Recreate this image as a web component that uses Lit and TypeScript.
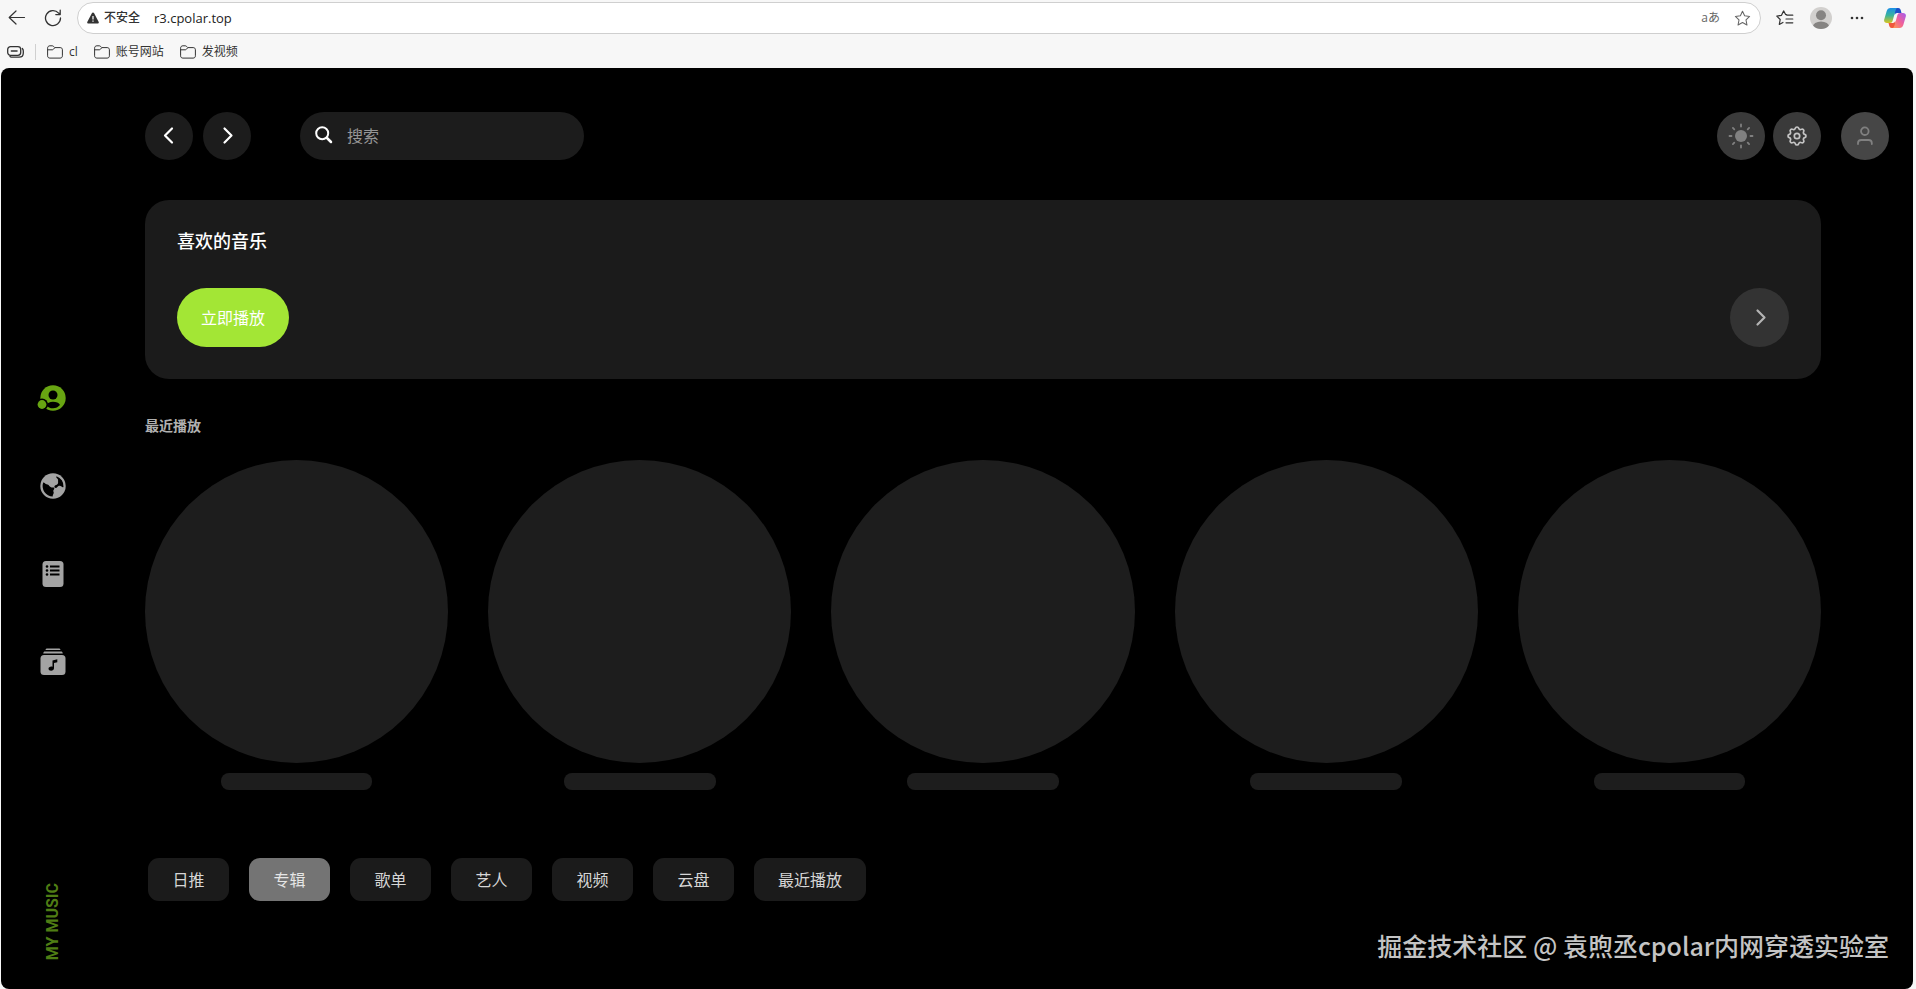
import { LitElement, html, css, svg } from "lit";
import { customElement, state } from "lit/decorators.js";

const folderIcon = html`<svg class="folder" viewBox="0 0 16 14" width="16" height="14" aria-hidden="true">
  <path d="M.6 3.2c0-1.500.9-2.400 2.300-2.400h2.300c.6 0 1 .2 1.400.6l1.200 1.200h5.400c1.400 0 2.200.9 2.200 2.200v6c0 1.500-.9 2.300-2.300 2.300H2.900C1.500 13.100.6 12.300.6 10.800z"/>
  <path d="M.6 4.800h4.600c.6 0 .9-.2 1.300-.6l1.400-1.600"/>
</svg>`;

const chevron = (dir: "left" | "right") => html`<svg viewBox="0 0 24 24" width="24" height="24" fill="none"
  stroke="currentColor" stroke-width="2.200" stroke-linecap="round" stroke-linejoin="round" aria-hidden="true">
  ${dir === "left" ? svg`<path d="M15 4.500l-7 7 7 7"/>` : svg`<path d="M9.500 4.500l7 7-7 7"/>`}
</svg>`;

const starPath = "M8 1.200l2 4.300 4.700.6-3.400 3.300.9 4.700L8 11.800l-4.200 2.300.9-4.700L1.300 6.100 6 5.500z";

@customElement("browser-bar")
export class BrowserBar extends LitElement {
  static styles = css`
    :host { display: block; color: #333; font: 12px/18px "Open Sans", "Noto Sans CJK SC", sans-serif; }
    button { border: 0; background: none; padding: 0; margin: 0; color: inherit; font: inherit; display: flex; align-items: center; justify-content: center; }
    svg { display: block; fill: none; stroke: currentColor; }
    .row { display: flex; align-items: center; height: 36px; padding: 0 10px 0 8px; }
    .nav { width: 18px; height: 18px; margin-right: 18px; }
    .address { flex: 1; display: flex; align-items: center; box-sizing: border-box; height: 32px; margin-left: -3px; padding: 0 9px; background: #fff; border: 1px solid #cfcfcf; border-radius: 16px; }
    .warn { gap: 5px; color: #333; font-weight: 500; }
    .url { flex: 1; min-width: 0; margin-left: 14px; padding: 0; border: 0; outline: 0; background: none; color: #222; font: 13px/20px "Open Sans", sans-serif; }
    .lang { font-size: 12px; color: #666; margin-right: 14px; }
    .star { color: #666; }
    .tools { display: flex; align-items: center; margin-left: 15px; }
    .avatar { margin: 0 18px 0 16px; }
    .more { margin-right: 20px; }
    .avatar svg, .copilot svg, .more svg, .warn svg { stroke: none; }
    .bookmarks { display: flex; align-items: center; height: 32px; padding: 0 7px; }
    .divider { width: 1px; height: 16px; margin: 0 11px; background: #d0d0d0; }
    .bookmark { display: flex; align-items: center; gap: 6px; margin-right: 16px; color: #333; text-decoration: none; }
    .folder { color: #333; }
  `;

  render() {
    return html`
      <div class="row">
        <button class="nav" aria-label="back"><svg viewBox="0 0 18 18" width="18" height="18" stroke-width="1.200" stroke-linecap="round" stroke-linejoin="round"><path d="M16.500 8.500H1.200M8 2L1.200 8.500 8 15"/></svg></button>
        <button class="nav" aria-label="reload"><svg viewBox="0 0 18 18" width="18" height="18" stroke-width="1.300" stroke-linecap="round" stroke-linejoin="round"><path d="M16.500 9A7.500 7.500 0 1 1 14.600 4.100L16 5.400M16.200 1.200v4.400h-4.400"/></svg></button>
        <div class="address">
          <button class="warn"><svg viewBox="0 0 12 12" width="12" height="12"><path fill="#333" d="M6 .4c.5 0 .8.3 1 .7l4.600 8.700c.5.900 0 1.700-1 1.700H1.400c-1 0-1.500-.8-1-1.700L5 1.100c.2-.4.500-.7 1-.7z"/><path fill="#fff" d="M5.400 4h1.200v3.600H5.400zM5.400 8.500h1.200v1.200H5.400z"/></svg>不安全</button>
          <input class="url" aria-label="address" .value=${"r3.cpolar.top"}>
          <button class="lang">aあ</button>
          <button class="star" aria-label="favorite"><svg viewBox="0 0 16 16" width="17" height="17" stroke-linejoin="round"><path d=${starPath}/></svg></button>
        </div>
        <div class="tools">
          <button aria-label="favorites"><svg viewBox="0 0 18 16" width="18" height="16" stroke-width="1.200" stroke-linecap="round" stroke-linejoin="round"><path d="M9.600 4.500L7.600.9 5.500 5.300.8 6.100l3.400 3.400-.9 4.900 3.600-2M9.600 4.500h1M10.800 5.200h6M10 9h6.800M10 12.800h6.800"/></svg></button>
          <button class="avatar" aria-label="profile"><svg viewBox="0 0 22 22" width="22" height="22"><defs><clipPath id="disc"><circle cx="11" cy="11" r="11"/></clipPath></defs><g clip-path="url(#disc)"><rect width="22" height="22" fill="#d2d0ce"/><circle cx="11" cy="8.200" r="5" fill="#868482"/><ellipse cx="11" cy="20" rx="8.200" ry="5.600" fill="#868482"/></g></svg></button>
          <button class="more" aria-label="more"><svg viewBox="0 0 14 4" width="14" height="4"><g fill="#333"><circle cx="2" cy="2" r="1.300"/><circle cx="7" cy="2" r="1.300"/><circle cx="12" cy="2" r="1.300"/></g></svg></button>
          <button class="copilot" aria-label="copilot"><svg viewBox="0 0 22 20" width="22" height="20">
            <defs>
              <linearGradient id="cool" x1="0" y1="0" x2="0" y2="1"><stop offset="0" stop-color="#1a8fe8"/><stop offset=".5" stop-color="#3bb49a"/><stop offset="1" stop-color="#d9c51e"/></linearGradient>
              <linearGradient id="warm" x1="1" y1="0" x2="0" y2="1"><stop offset="0" stop-color="#a35cf0"/><stop offset=".5" stop-color="#f0609a"/><stop offset="1" stop-color="#ff9d4d"/></linearGradient>
            </defs>
            <path fill="#1c50c8" d="M9 0h5.300c1.300 0 2 .8 2.400 2l.8 3h-4.300c-1.400 0-2 .7-2.400 2z"/>
            <path fill="url(#cool)" d="M6.500 0h7c-1 .3-1.500 1-1.900 2.300L8.700 12.500C8.200 14.300 7.300 15 5.800 15H3C.8 15-.3 13.600.2 11.500L2.700 3C3.300 1 4.500 0 6.500 0z"/>
            <path fill="#f0583c" d="M13 20H7.700c-1.300 0-2-.8-2.400-2l-.8-3h4.300c1.400 0 2-.7 2.400-2z"/>
            <path fill="url(#warm)" d="M15.500 20h-7c1-.3 1.500-1 1.900-2.300l2.900-10.200C13.800 5.700 14.700 5 16.200 5H19c2.200 0 3.300 1.400 2.800 3.500L19.300 17c-.6 2-1.800 3-3.800 3z"/>
          </svg></button>
        </div>
      </div>
      <nav class="bookmarks">
        <button aria-label="workspaces"><svg viewBox="0 0 17 12" width="17" height="12" stroke-width="1.300" stroke-linecap="round"><rect x=".7" y=".7" width="13" height="8.600" rx="2.800"/><path d="M4.300 5h5.800M15.300 2.500c.7.7 1 1.500 1 2.500v2c0 2.700-1.500 4.200-4.200 4.200H5.500c-1 0-1.800-.2-2.500-.8"/></svg></button>
        <span class="divider"></span>
        ${["cl", "账号网站", "发视频"].map((t) => html`<a class="bookmark" href="#">${folderIcon}${t}</a>`)}
      </nav>
    `;
  }
}

const sideIcons = [
  { label: "我的音乐", art: svg`<circle cx="15" cy="14" r="12.700"/><circle cx="15" cy="11" r="4.500" fill="#000"/><path fill="#000" d="M8 21.200c1-2.200 3.800-3.400 7-3.400s6 1.200 7 3.200c-1.800 2-4.200 3.300-7 3.300s-5.200-1.100-7-3.100z"/><circle cx="4" cy="20.500" r="6" fill="#000"/><circle cx="4" cy="20.500" r="4.400"/>` },
  { label: "发现", art: svg`<circle cx="15" cy="14" r="12.700"/><path fill="#000" d="M5.200 10.500c1-.3 1.600.7 2.600 1.500 1 .7 2.300.2 3 1.200.6.900 1.400 1.900 2.700 2.200 1.300.2 2.200-.4 2.700.5.5 1-.6 1.600-.9 2.600-.2.900.6 1.500.4 2.600-.2 1.200-1 1.800-1 3.400A10.500 10.500 0 0 1 5.200 10.500z"/><path fill="#000" d="M18.500 4.200a10.500 10.500 0 0 1 7 10.700c-.6.600-1.400.300-2-.3-1-.9-2.200-1.100-3.400-.3-.8.6-1.200 1.600-2.200 1.600-1.200 0-2-1-1.300-2 .8-1 2.500-.9 3.200-2.100.6-1 .1-2 .3-3.100.2-1.400-.7-1.700-1.400-2.600-.5-.6-.6-1.200-.2-1.900z"/>` },
  { label: "歌单", art: svg`<rect x="4.500" y="1" width="21" height="26" rx="3.500"/><g fill="#000"><path d="M12 5.500h9.500v2H12zM12 9.500h9.500v2H12zM12 13.500h9.500v2H12z"/><circle cx="9" cy="6.500" r="1.300"/><circle cx="9" cy="10.500" r="1.300"/><circle cx="9" cy="14.500" r="1.300"/></g>` },
  { label: "音乐库", art: svg`<path d="M9 .5h12c.8 0 1.300.5 1.500 1.500h-15C7.700 1 8.200.5 9 .5zM7 3.500h16c1 0 1.500.6 1.800 2H5.200c.3-1.400.8-2 1.800-2z"/><rect x="2.500" y="7" width="25" height="20" rx="3.500"/><path fill="#000" d="M14.500 12.400l4.800-1.200v3l-3.300.9v5.200c0 1.300-1.300 2.400-2.900 2.400-1.500 0-2.600-.8-2.600-2 0-1.500 1.900-2.600 4-2z"/>` },
];

@customElement("side-rail")
export class SideRail extends LitElement {
  static styles = css`
    :host { display: grid; grid-template-rows: 1fr auto 1fr; justify-items: center; width: 104px; }
    .list { grid-row: 2; display: flex; flex-direction: column; gap: 60px; padding-top: 2px; }
    .item { display: block; height: 28px; color: #a3a3a3; }
    .item.active { color: #68a512; }
    svg { display: block; fill: currentColor; overflow: visible; }
    .label { grid-row: 3; align-self: end; margin-bottom: 29px; writing-mode: vertical-rl; transform: rotate(180deg); color: #4f7d14; font: 700 16px/20px Roboto, sans-serif; }
  `;
  render() {
    return html`
      <nav class="list">
        ${sideIcons.map((icon, i) => html`<a class="item ${i === 0 ? "active" : ""}" href="#" aria-label=${icon.label}><svg viewBox="0 0 30 28" width="30" height="28">${icon.art}</svg></a>`)}
      </nav>
      <span class="label">MY MUSIC</span>
    `;
  }
}

@customElement("app-root")
export class AppRoot extends LitElement {
  @state() private tab = "专辑";

  static styles = css`
    :host { display: flex; flex-direction: column; min-height: 100vh; box-sizing: border-box; background: #f7f7f7; font: 16px/24px "Noto Sans CJK SC", sans-serif; }
    button { display: flex; align-items: center; justify-content: center; box-sizing: border-box; margin: 0; padding: 0; border: 0; color: inherit; font: inherit; cursor: pointer; }
    svg { display: block; }
    .page { position: relative; flex: 1; display: flex; margin: 0 3px 0 1px; background: #000; border-radius: 8px; }
    .content { flex: 1; min-width: 0; padding: 44px 24px 44px 40px; }
    .header { display: flex; align-items: center; margin-bottom: 40px; }
    .round { width: 48px; height: 48px; border-radius: 50%; background: #1c1c1c; color: #fff; }
    .history { display: flex; gap: 10px; }
    .search { display: flex; align-items: center; gap: 14px; box-sizing: border-box; width: 284px; height: 48px; margin-left: 49px; padding: 0 15px 2px; border-radius: 24px; background: #1c1c1c; color: #fff; }
    .query { flex: 1; min-width: 0; padding: 0; border: 0; outline: 0; background: none; color: #fff; font: inherit; }
    .query::placeholder { color: #969696; opacity: 1; }
    .actions { display: flex; gap: 8px; margin-left: auto; }
    .tool { background: #3a3a3a; color: #c4c4c4; }
    .theme { color: #808080; }
    .user { margin-left: 12px; background: #464646; color: #808080; }
    .body { margin-right: 68px; }
    .card { padding: 28px 32px 32px; border-radius: 24px; background: #1b1b1b; }
    .card-title { margin: 0 0 36px; color: #fff; font-size: 18px; line-height: 24px; font-weight: 500; }
    .card-row { display: flex; justify-content: space-between; }
    .play { height: 59px; padding: 0 24px 2px; border-radius: 30px; background: #a3e635; color: #fff; }
    .go { width: 59px; height: 59px; border-radius: 50%; background: #333; color: #b4b4b4; }
    .section { margin: 36px 0 25px; color: #b0b0b0; font-size: 14px; line-height: 20px; font-weight: 700; }
    .recent { display: grid; grid-template-columns: repeat(5, 1fr); gap: 40px; }
    .disc { aspect-ratio: 1; border-radius: 50%; background: #1d1d1d; }
    .name { width: 50%; height: 17px; margin: 10px auto 0; border-radius: 8px; background: #1d1d1d; }
    .tabs { display: flex; gap: 20px; margin-top: 68px; padding-left: 3px; }
    .tab { min-width: 81px; height: 43px; padding: 0 24px 2px; border-radius: 11px; background: #1b1b1b; color: #d6d6d6; }
    .tab.active { background: #747474; color: #e6e6e6; }
    .watermark { position: absolute; right: 24px; bottom: 26px; color: #c4c4c4; font-size: 25px; line-height: 36px; font-weight: 500; }
  `;

  render() {
    return html`
      <browser-bar></browser-bar>
      <div class="page">
        <side-rail></side-rail>
        <main class="content">
          <header class="header">
            <div class="history">
              <button class="round" aria-label="后退">${chevron("left")}</button>
              <button class="round" aria-label="前进">${chevron("right")}</button>
            </div>
            <label class="search">
              <svg viewBox="0 0 18 18" width="18" height="18" fill="none" stroke="currentColor" stroke-width="2" stroke-linecap="round" aria-hidden="true"><circle cx="7.200" cy="7.200" r="6"/><path stroke-width="2.500" d="M12 12l4 4"/></svg>
              <input class="query" type="text" placeholder="搜索" aria-label="搜索">
            </label>
            <div class="actions">
              <button class="round tool theme" aria-label="主题"><svg viewBox="0 0 26 26" width="26" height="26" fill="none" stroke="currentColor" stroke-width="1.800" stroke-linecap="round"><circle cx="13" cy="13" r="6" fill="currentColor" stroke="none"/><path d="M13 1.500v2M13 22.500v2M1.500 13h2M22.500 13h2M4.900 4.900l1.400 1.400M19.700 19.700l1.400 1.400M4.900 21.100l1.400-1.400M19.700 6.300l1.400-1.400"/></svg></button>
              <button class="round tool" aria-label="设置"><svg viewBox="0 0 24 24" width="24" height="24" fill="none" stroke="currentColor" stroke-width="1.700" stroke-linejoin="round"><path d="M10.325 4.317c.426-1.756 2.924-1.756 3.350 0a1.724 1.724 0 0 0 2.573 1.066c1.543-.94 3.310.826 2.370 2.370a1.724 1.724 0 0 0 1.065 2.572c1.756.426 1.756 2.924 0 3.350a1.724 1.724 0 0 0-1.066 2.573c.94 1.543-.826 3.310-2.370 2.370a1.724 1.724 0 0 0-2.572 1.065c-.426 1.756-2.924 1.756-3.350 0a1.724 1.724 0 0 0-2.573-1.066c-1.543.94-3.310-.826-2.370-2.370a1.724 1.724 0 0 0-1.065-2.572c-1.756-.426-1.756-2.924 0-3.350a1.724 1.724 0 0 0 1.066-2.573c-.94-1.543.826-3.310 2.370-2.370a1.724 1.724 0 0 0 2.572-1.065z"/><circle cx="12" cy="12" r="2.700"/></svg></button>
              <button class="round user" aria-label="用户"><svg viewBox="0 0 18 20" width="18" height="20" fill="none" stroke="currentColor" stroke-width="1.800" stroke-linecap="round" stroke-linejoin="round"><circle cx="8.800" cy="5.200" r="3.800"/><path d="M2 18v-1c0-2 1.300-3 3.300-3h7.200c2 0 3.300 1 3.300 3v1"/></svg></button>
            </div>
          </header>
          <div class="body">
            <section class="card">
              <h2 class="card-title">喜欢的音乐</h2>
              <div class="card-row">
                <button class="play">立即播放</button>
                <button class="go" aria-label="查看">${chevron("right")}</button>
              </div>
            </section>
            <h3 class="section">最近播放</h3>
            <div class="recent">
              ${[0, 1, 2, 3, 4].map(() => html`<div><div class="disc"></div><div class="name"></div></div>`)}
            </div>
            <div class="tabs">
              ${["日推", "专辑", "歌单", "艺人", "视频", "云盘", "最近播放"].map((t) => html`<button class="tab ${t === this.tab ? "active" : ""}" @click=${() => (this.tab = t)}>${t}</button>`)}
            </div>
          </div>
        </main>
        <div class="watermark">掘金技术社区 @ 袁煦丞cpolar内网穿透实验室</div>
      </div>
    `;
  }
}
